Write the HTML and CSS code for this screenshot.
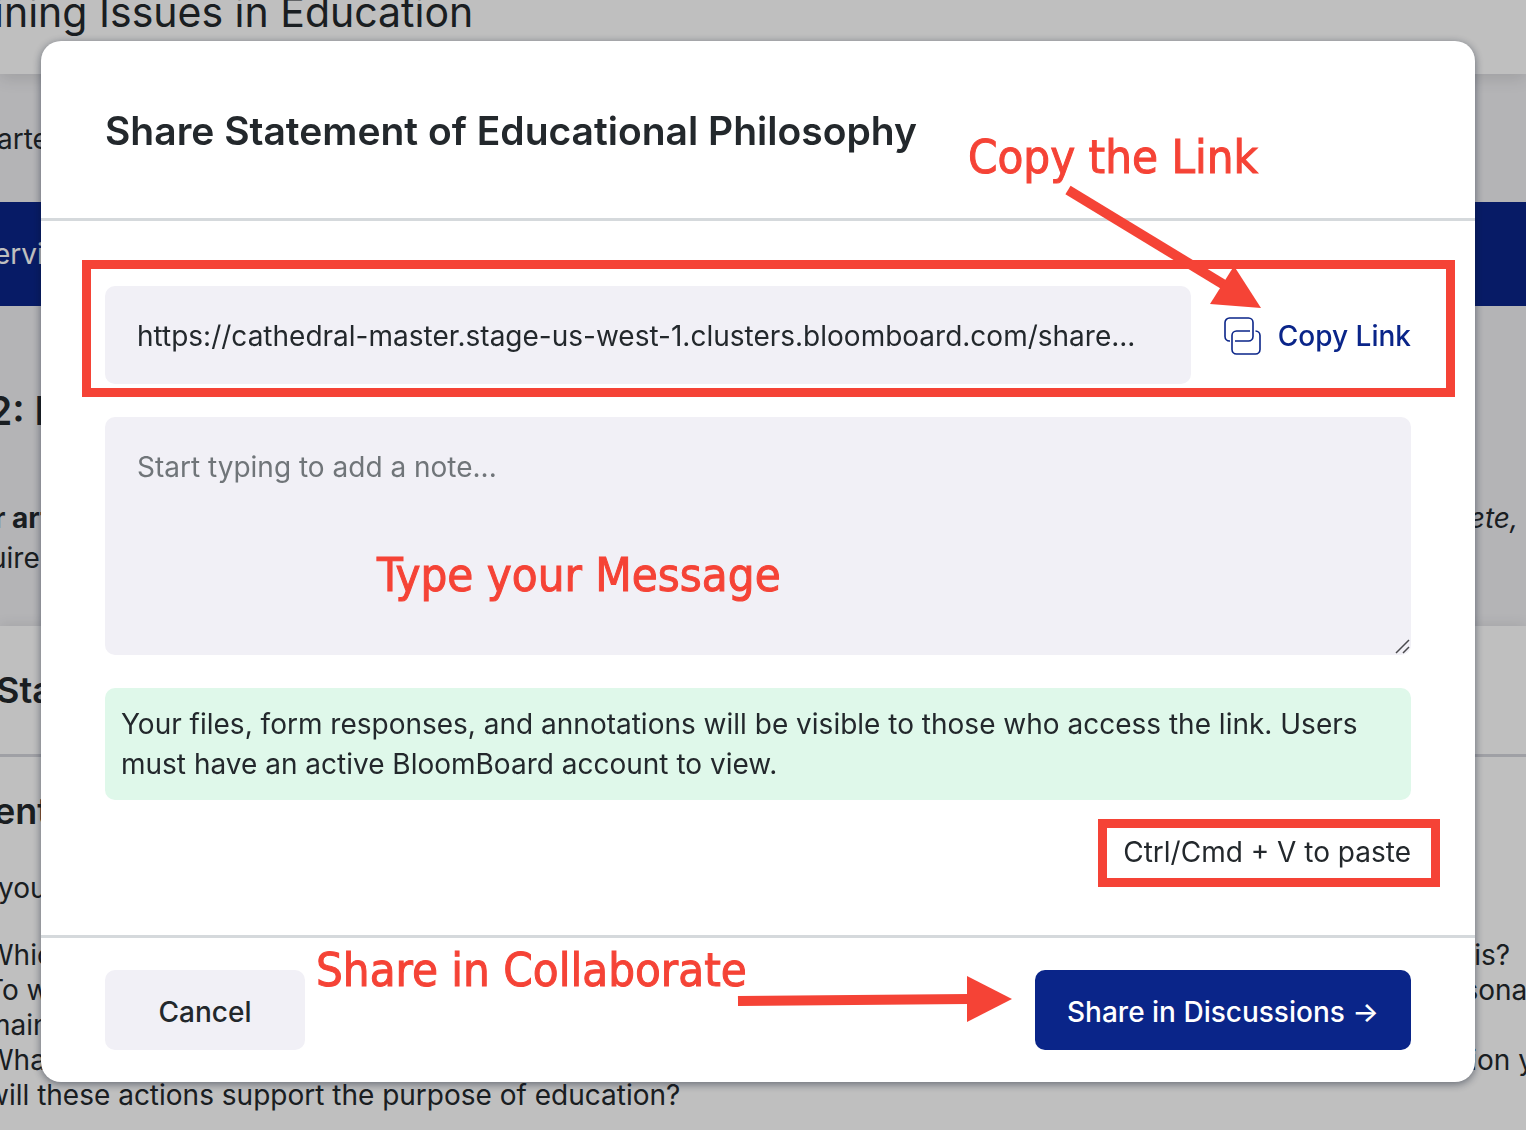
FILE: index.html
```html
<!DOCTYPE html>
<html lang="en">
<head>
<meta charset="utf-8">
<meta name="viewport" content="width=device-width, initial-scale=1">
<title>Share Statement of Educational Philosophy</title>
<link rel="stylesheet" href="styles.css">
</head>
<body>
<div class="page">
  <header class="topbar"><h1 class="page-title">ining Issues in Education</h1></header>
  <div class="crumbs">arte</div>
  <div class="band">ervi</div>
  <section class="intro">
    <h2 class="intro-title">2: I</h2>
    <div class="split"><strong>r art</strong><em>ete,</em></div>
    <div class="split shift">uire</div>
  </section>
  <section class="artifact">
    <h2 class="artifact-title">Sta</h2>
    <div class="artifact-body">
      <h3 class="prompt-title">ent</h3>
      <p class="prompt">you</p>
      <div class="questions">
        <div class="split"><span>Whic</span><span class="end-a">is?</span></div>
        <div class="split"><span>To w</span><span class="end-b">sonal</span></div>
        <div class="split"><span>main</span></div>
        <div class="split"><span>What</span><span class="end-b">ion y</span></div>
        <div class="split"><span>will these actions support the purpose of education?</span></div>
      </div>
    </div>
  </section>
</div>

<div class="overlay">
  <div class="modal" role="dialog" aria-modal="true" aria-labelledby="dialog-title">
    <div class="modal-head">
      <h2 class="modal-title" id="dialog-title">Share Statement of Educational Philosophy</h2>
      <span class="callout callout-copy">Copy the Link</span>
    </div>
    <div class="modal-body">
      <div class="link-row">
        <input class="link-field" type="text" readonly aria-label="Share link" value="https://cathedral-master.stage-us-west-1.clusters.bloomboard.com/share...">
        <button class="copy-btn" type="button">
          <svg class="copy-icon" viewBox="0 0 38 38" aria-hidden="true">
            <path d="M6 24H5.500A4.500 4.500 0 0 1 1 19.500V5.500A4.500 4.500 0 0 1 5.500 1H24.500A4.500 4.500 0 0 1 29 5.500V19.500A4.500 4.500 0 0 1 24.500 24H11"/>
            <path d="M26 14H12.500A4.500 4.500 0 0 0 8 18.500V32.500A4.500 4.500 0 0 0 12.500 37H31.500A4.500 4.500 0 0 0 36 32.500V18.500A4.500 4.500 0 0 0 31.500 14"/>
          </svg>
          Copy Link
        </button>
        <svg class="arrow arrow-copy" viewBox="0 0 200 126" aria-hidden="true">
          <path class="shaft" d="M5 6L163 102"/>
          <path class="tip" d="M198 124L147 120L171 82Z"/>
        </svg>
      </div>
      <div class="note-wrap">
        <textarea class="note" aria-label="Note" placeholder="Start typing to add a note..."></textarea>
        <span class="callout callout-type">Type your Message</span>
        <svg class="grip" viewBox="0 0 16 16" aria-hidden="true"><path d="M1 14L14 1M8 14L14 8"/></svg>
      </div>
      <p class="notice">Your files, form responses, and annotations will be visible to those who access the link. Users must have an active BloomBoard account to view.</p>
      <p class="hint"><span class="hint-text">Ctrl/Cmd + V to paste</span></p>
    </div>
    <div class="modal-foot">
      <button class="btn btn-plain" type="button">Cancel</button>
      <span class="callout callout-share">Share in Collaborate</span>
      <svg class="arrow arrow-share" viewBox="0 0 276 48" aria-hidden="true">
        <path class="shaft" d="M1 26L232 24"/>
        <path class="tip" d="M275 24L230 1V47Z"/>
      </svg>
      <button class="btn btn-primary" type="button">Share in Discussions →</button>
    </div>
  </div>
</div>
</body>
</html>
```
FILE: styles.css
```css
* { box-sizing: border-box; }

:root {
  --ink: #23282c;
  --navy: #0a2589;
  --field: #f1f0f6;
  --line: #d5d9dc;
  --red: #f54336;
}

html, body { height: 100%; }

body {
  margin: 0;
  overflow: hidden;
  font-family: Inter, "Liberation Sans", sans-serif;
  font-size: 28px;
  line-height: 40px;
  color: var(--ink);
}

h1, h2, h3, p { margin: 0; }
h1, h2, h3 { font-weight: 600; }

/* Page behind the dialog */
.page { height: 100%; overflow: hidden; background: #f0f0f3; }
.topbar {
  height: 74px;
  background: #fff;
  box-shadow: 0 4px 16px rgba(0, 0, 0, .12);
  position: relative;
}
.page-title {
  margin: 0 -6px;
  line-height: 24px;
  font-size: 41px;
  font-weight: 400;
}
.crumbs, .band { display: flex; align-items: center; margin-left: -3px; }
.crumbs { height: 130px; margin-bottom: -2px; }
.band { height: 104px; margin-left: 0; background: var(--navy); color: #fff; text-indent: -6px; }
.intro { height: 320px; padding-top: 77px; }
.intro-title { margin: 0 0 59px -12px; font-size: 39px; line-height: 56px; }
.split { display: flex; justify-content: space-between; margin: 0 8px 0 -6px; }
.shift { margin-left: -10px; }
.artifact { background: #fff; box-shadow: 0 -2px 12px rgba(0, 0, 0, .08); min-height: 504px; }
.artifact-title {
  padding: 44px 0;
  border-bottom: 3px solid #d5d6dc;
  font-size: 36px;
  text-indent: -4px;
}
.artifact-body { padding-top: 34px; }
.prompt-title { margin-left: -6px; font-size: 36px; }
.prompt { margin-top: 37px; margin-left: -2px; }
.questions { margin-top: 30px; line-height: 35px; }
.questions .split { margin: 0 0 0 -14px; }
.end-a { margin-right: 16px; }
.end-b { margin-right: -8px; }

/* Dialog */
.overlay {
  position: fixed;
  inset: 0;
  padding: 41px 51px 41px 41px;
  background: rgba(0, 0, 0, .25);
}
.modal {
  background: #fff;
  border-radius: 20px;
  box-shadow: 0 2px 8px rgba(10, 20, 40, .5);
}
.modal-head, .modal-foot {
  position: relative;
  display: flex;
  align-items: center;
  padding: 0 64px;
}
.modal-head { height: 180px; padding-top: 2px; border-bottom: 3px solid var(--line); }
.modal-title { font-size: 39px; line-height: 48px; }
.modal-body { padding: 65px 64px 63px; }

.link-row { position: relative; display: flex; gap: 33px; height: 98px; }
.link-row::after {
  content: "";
  position: absolute;
  inset: -26px -44px -13px -23px;
  border: 9px solid var(--red);
  pointer-events: none;
}
.link-field {
  flex: 1;
  min-width: 0;
  padding: 2px 32px 0;
  border: 0;
  border-radius: 10px;
  background: var(--field);
  color: var(--ink);
  font: inherit;
  text-overflow: ellipsis;
}
.copy-btn {
  display: flex;
  align-items: center;
  gap: 16px;
  padding: 2px 0 0;
  border: 0;
  background: none;
  color: var(--navy);
  font: inherit;
  font-weight: 500;
}
.copy-icon { width: 38px; height: 38px; fill: none; stroke: currentColor; stroke-width: 1.600; }

.note-wrap { position: relative; display: flex; margin-top: 33px; }
.note {
  flex: 1;
  height: 238px;
  padding: 30px 32px;
  border: 0;
  border-radius: 10px;
  background: var(--field);
  color: var(--ink);
  font: inherit;
  resize: none;
}
.note::placeholder { color: #707579; }
.grip {
  position: absolute;
  right: 0;
  bottom: 0;
  width: 16px;
  height: 16px;
  fill: none;
  stroke: #4a4a4e;
  stroke-width: 1.500;
}

.notice {
  margin-top: 33px;
  padding: 16px;
  border-radius: 10px;
  background: #dff8ea;
}
.hint { margin-top: 32px; text-align: right; }
.hint-text { position: relative; }
.hint-text::after {
  content: "";
  position: absolute;
  inset: -16px -29px -18px -25px;
  border: 9px solid var(--red);
}

.modal-foot { justify-content: space-between; padding: 32px 64px; border-top: 3px solid var(--line); }
.btn {
  height: 80px;
  padding: 4px 32px 0;
  border: 0;
  border-radius: 10px;
  font: inherit;
  font-weight: 500;
}
.btn-plain { width: 200px; background: var(--field); color: var(--ink); }
.btn-primary { background: var(--navy); color: #fff; }

/* Red callouts drawn over the dialog */
.callout {
  position: absolute;
  color: var(--red);
  font-family: "DejaVu Sans Condensed", "Noto Sans", sans-serif;
  font-size: 47px;
  line-height: 56px;
  white-space: nowrap;
  pointer-events: none;
  -webkit-text-stroke: 1px var(--red);
}
.callout-copy { right: 217px; top: 88px; }
.callout-type { left: 272px; top: 130px; }
.callout-share { left: 275px; top: 4px; }
.arrow { position: absolute; z-index: 1; pointer-events: none; }
.shaft { fill: none; stroke: var(--red); stroke-width: 10; }
.tip { fill: var(--red); }
.arrow-copy { right: 148px; top: -102px; width: 200px; height: 126px; }
.arrow-share { right: 462px; top: 37px; width: 276px; height: 48px; }
```
